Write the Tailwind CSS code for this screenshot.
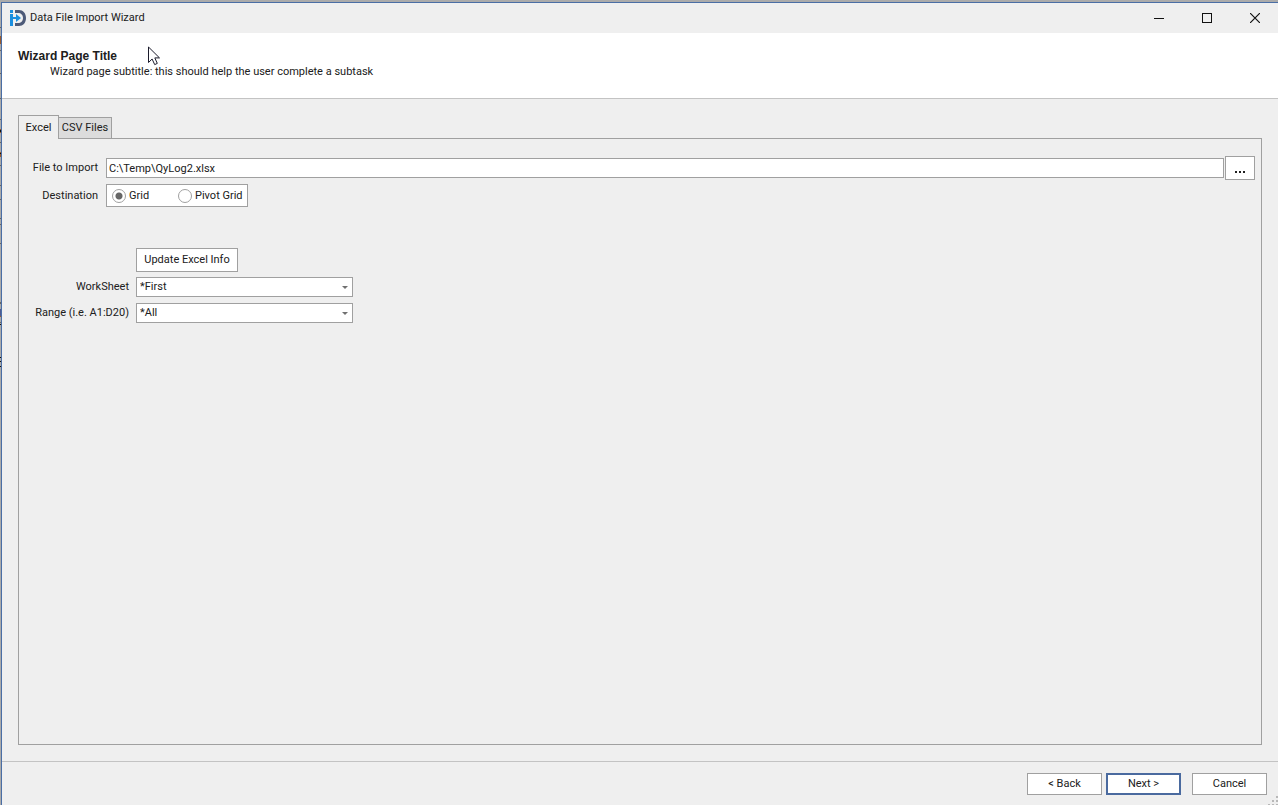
<!DOCTYPE html>
<html lang="en">
<head>
    <meta charset="UTF-8">
    <meta name="viewport" content="width=device-width, initial-scale=1.0">
    <title>Data File Import Wizard</title>
    <script src="https://cdn.jsdelivr.net/npm/@tailwindcss/browser@4"></script>
</head>
<body class="bg-[#ababab] font-[Roboto,sans-serif] text-[11px] leading-4 text-[#202020]">
    <!-- edge of the window behind -->
    <svg class="absolute left-0 top-0" width="1" height="805" shape-rendering="crispEdges">
        <path d="M.5 27v1M.5 50v1M.5 73v1M.5 98v1M.5 119v1M.5 142v1M.5 165v1M.5 185v1M.5 199v1M.5 218v1M.5 224v1M.5 243v1M.5 302v2M.5 322v1" stroke="#666"/>
        <path d="M.5 36v8M.5 129v4M.5 152v5M.5 316v1" stroke="#9a5a2c"/>
        <path d="M.5 309v7" stroke="#4c5a92"/>
        <path d="M.5 130v2M.5 153v1M.5 324v1M.5 357v1M.5 361v1M.5 366v1" stroke="#111"/>
    </svg>

    <div class="h-screen pl-px pt-[2px]">
        <div class="relative flex h-full flex-col border-l border-t border-[#4a6ea5] bg-[#efefef]">

            <header class="flex h-[30px] shrink-0 items-center justify-between">
                <div class="flex items-center gap-1 pl-2">
                    <svg width="16" height="16" viewBox="0 0 16 16">
                        <path d="M5 0h4c4 0 7 3 7 8s-3 8-7 8H5v-3h3c3 0 5-2 5-5s-2-5-5-5H5z" fill="#4d5a78"/>
                        <path d="M0 0h3v3H0zM0 4h3v3h3V4l5 4-5 4V9H3v7H0z" fill="#1b8fdf"/>
                    </svg>
                    <span>Data File Import Wizard</span>
                </div>
                <div class="-mr-px flex h-full">
                    <button aria-label="Minimize" class="flex w-12 items-center justify-center">
                        <svg width="10" height="10" shape-rendering="crispEdges"><path d="M0 5.5h10" stroke="#111"/></svg>
                    </button>
                    <button aria-label="Maximize" class="flex w-12 items-center justify-center">
                        <svg width="10" height="10" shape-rendering="crispEdges"><path d="M.5.5h9v9h-9z" fill="none" stroke="#111"/></svg>
                    </button>
                    <button aria-label="Close" class="flex w-12 items-center justify-center">
                        <svg width="10" height="10"><path d="M0 0l10 10M10 0L0 10" stroke="#111" stroke-width="1.2"/></svg>
                    </button>
                </div>
            </header>

            <div class="h-[66px] shrink-0 border-b border-[#c3c3c3] bg-white pl-4 pt-[15px]">
                <h1 class="font-['Liberation_Sans',sans-serif] text-[12px] font-bold leading-4">Wizard Page Title</h1>
                <p class="pl-8">Wizard page subtitle: this should help the user complete a subtask</p>
            </div>

            <main class="flex flex-1 flex-col p-4">
                <div class="z-10 -mb-px flex items-end" role="tablist">
                    <button role="tab" aria-selected="true" class="h-6 w-[41px] border border-b-0 border-[#a0a0a0] bg-[#efefef]">Excel</button>
                    <button role="tab" aria-selected="false" class="-ml-px h-[22px] w-[54px] border border-[#a0a0a0] bg-[#dcdcdc]">CSV Files</button>
                </div>

                <div class="flex-1 border border-[#a0a0a0] pl-2 pr-[6px] pt-[17px]" role="tabpanel">
                    <div class="flex items-center">
                        <label for="file" class="w-[79px] pr-2 text-right">File to Import</label>
                        <input id="file" type="text" value="C:\Temp\QyLog2.xlsx" class="mr-px h-5 min-w-0 flex-1 border border-[#a0a0a0] bg-white px-[2px]">
                        <button aria-label="Browse" class="flex h-6 w-[30px] items-center justify-center border border-[#a0a0a0] bg-white pt-[7px]">
                            <svg width="10" height="2" shape-rendering="crispEdges"><path d="M0 0h2v2H0zM4 0h2v2H4zM8 0h2v2H8z" fill="#202020"/></svg>
                        </button>
                    </div>

                    <div class="mt-1 flex items-center">
                        <span id="dest" class="w-[79px] pr-2 text-right">Destination</span>
                        <div role="radiogroup" aria-labelledby="dest" class="flex h-[23px] w-[142px] items-center border border-[#a0a0a0] bg-white pl-[5px]">
                            <label class="flex w-[66px] items-center gap-[3px]">
                                <input type="radio" name="destination" checked class="size-[14px] appearance-none rounded-full border border-[#a0a0a0] bg-white checked:bg-[radial-gradient(circle,#666_3px,transparent_4px)]">
                                Grid
                            </label>
                            <label class="flex items-center gap-[3px] whitespace-nowrap">
                                <input type="radio" name="destination" class="size-[14px] appearance-none rounded-full border border-[#a0a0a0] bg-white checked:bg-[radial-gradient(circle,#666_3px,transparent_4px)]">
                                Pivot Grid
                            </label>
                        </div>
                    </div>

                    <button class="ml-[109px] mt-[41px] block h-6 w-[102px] border border-[#a0a0a0] bg-white">Update Excel Info</button>

                    <div class="mt-[5px] flex items-center">
                        <label for="sheet" class="w-[109px] pr-[7px] text-right">WorkSheet</label>
                        <div class="relative">
                            <select id="sheet" class="block h-5 w-[217px] appearance-none border border-[#a0a0a0] bg-white px-[3px]">
                                <option>*First</option>
                            </select>
                            <svg class="pointer-events-none absolute right-[5px] top-[9px]" width="6" height="3"><path d="M0 0h6L3 3z" fill="#707070"/></svg>
                        </div>
                    </div>

                    <div class="mt-[6px] flex items-center">
                        <label for="range" class="w-[109px] pr-[7px] text-right">Range (i.e. A1:D20)</label>
                        <div class="relative">
                            <select id="range" class="block h-5 w-[217px] appearance-none border border-[#a0a0a0] bg-white px-[3px]">
                                <option>*All</option>
                            </select>
                            <svg class="pointer-events-none absolute right-[5px] top-[9px]" width="6" height="3"><path d="M0 0h6L3 3z" fill="#707070"/></svg>
                        </div>
                    </div>
                </div>
            </main>

            <footer class="flex h-11 shrink-0 justify-end border-t border-[#c3c3c3] pr-[11px] pt-[11px]">
                <button class="h-[22px] w-[75px] border border-[#a0a0a0] bg-white">&lt; Back</button>
                <button class="ml-1 h-[22px] w-[75px] border-2 border-[#4a6a9f] bg-white">Next &gt;</button>
                <button class="ml-[11px] h-[22px] w-[75px] border border-[#a0a0a0] bg-white">Cancel</button>
            </footer>

            <!-- resize grip -->
            <svg class="absolute bottom-0 right-0" width="10" height="9" shape-rendering="crispEdges">
                <path d="M8 0h2v2H8zM4 4h2v2H4zM8 4h2v2H8zM0 8h2v1H0zM4 8h2v1H4zM8 8h2v1H8z" fill="#b8b8b8"/>
            </svg>

            <!-- mouse pointer -->
            <svg class="pointer-events-none absolute left-[146px] top-[43px]" width="14" height="21" viewBox="0 0 14 21">
                <path d="M.5 1v15.5l3.6-3.5 2.6 5.6 2.6-1.2-2.5-5.5h4.7z" fill="#fff" stroke="#1c1c2c"/>
            </svg>
        </div>
    </div>
</body>
</html>
